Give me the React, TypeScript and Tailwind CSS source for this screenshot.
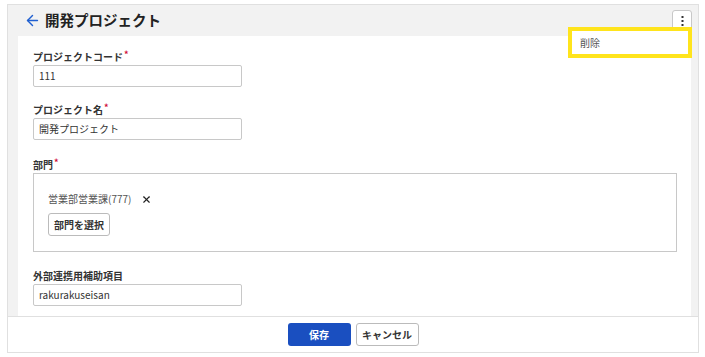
import { ArrowLeft, X } from 'lucide-react';

const font = { fontFamily: '"Noto Sans CJK JP", "Noto Sans", sans-serif' };

function Label({ text, required }: { text: string; required?: boolean }) {
  return (
    <div className="flex h-[14px] items-center text-[10px] font-bold leading-[14px] text-[#333]">
      {text}
      {required && <span className="relative -top-[2px] ml-[1px] text-[9px] text-[#d0103a]">*</span>}
    </div>
  );
}

function TextInput({ value }: { value: string }) {
  return (
    <div className="mt-[1px] flex h-[22px] w-[209px] items-center rounded-[2px] border border-[#c8c8c8] bg-white px-[5px] text-[10px] leading-none text-[#333]">
      {value}
    </div>
  );
}

export default function App() {
  return (
    <div className="h-[357px] w-[705px] bg-white pl-[7px] pt-[4px]" style={font}>
      <div className="relative flex h-[349px] w-[692px] flex-col border border-[#e0e0e0] bg-[#f2f2f2]">
        {/* Header */}
        <header className="flex h-[31px] shrink-0 items-center justify-between pl-[16px] pr-[6px]">
          <div className="flex items-center gap-[4px]">
            <ArrowLeft className="h-[17px] w-[17px] text-[#1f5fd0]" strokeWidth={2} />
            <h1 className="text-[14.5px] font-bold leading-none text-[#222]">開発プロジェクト</h1>
          </div>
          <button className="flex h-[21px] w-[20px] items-center justify-center rounded-[3px] border border-[#c8c8c8] bg-white">
            <svg width="3" height="10" viewBox="0 0 3 10">
              <rect x="0.5" y="0" width="2" height="2" fill="#333" />
              <rect x="0.5" y="4" width="2" height="2" fill="#333" />
              <rect x="0.5" y="8" width="2" height="2" fill="#333" />
            </svg>
          </button>
        </header>

        {/* Menu */}
        <div className="absolute right-[6px] top-[22px] z-10 flex h-[31px] w-[124px] items-center border-[4px] border-[#ffe41c] bg-white px-[8px] text-[10px] leading-none text-[#555]">
          削除
        </div>

        {/* Body */}
        <div className="min-h-0 flex-1 overflow-hidden pl-[10px] pr-[7px]">
          <div className="h-full bg-white px-[15px] pt-[14px]">
            <Label text="プロジェクトコード" required />
            <TextInput value="111" />

            <div className="mt-[16px]">
              <Label text="プロジェクト名" required />
              <TextInput value="開発プロジェクト" />
            </div>

            <div className="mt-[18px]">
              <Label text="部門" required />
              <div className="mt-[1px] h-[79px] w-[644px] border border-[#c8c8c8] px-[14px] pt-[18px]">
                <div className="flex h-[14px] items-center gap-[10px] text-[10px] leading-none text-[#555]">
                  営業部営業課(777)
                  <X className="h-[11px] w-[11px] text-[#222]" strokeWidth={2.5} />
                </div>
                <button className="mt-[7px] flex h-[23px] w-[62px] items-center justify-center rounded-[3px] border border-[#bbb] bg-white text-[10px] font-bold leading-none text-[#333]">
                  部門を選択
                </button>
              </div>
            </div>

            <div className="mt-[17px]">
              <Label text="外部連携用補助項目" />
              <TextInput value="rakurakuseisan" />
            </div>
          </div>
        </div>

        {/* Footer */}
        <footer className="flex h-[36px] shrink-0 items-center justify-center gap-[5px] border-t border-[#e0e0e0] bg-white">
          <button className="h-[23px] w-[63px] rounded-[3px] bg-[#1a4fc0] text-[10px] font-bold leading-none text-white">
            保存
          </button>
          <button className="h-[23px] w-[63px] rounded-[3px] border border-[#bbb] bg-white text-[10px] font-bold leading-none text-[#333]">
            キャンセル
          </button>
        </footer>
      </div>
    </div>
  );
}
